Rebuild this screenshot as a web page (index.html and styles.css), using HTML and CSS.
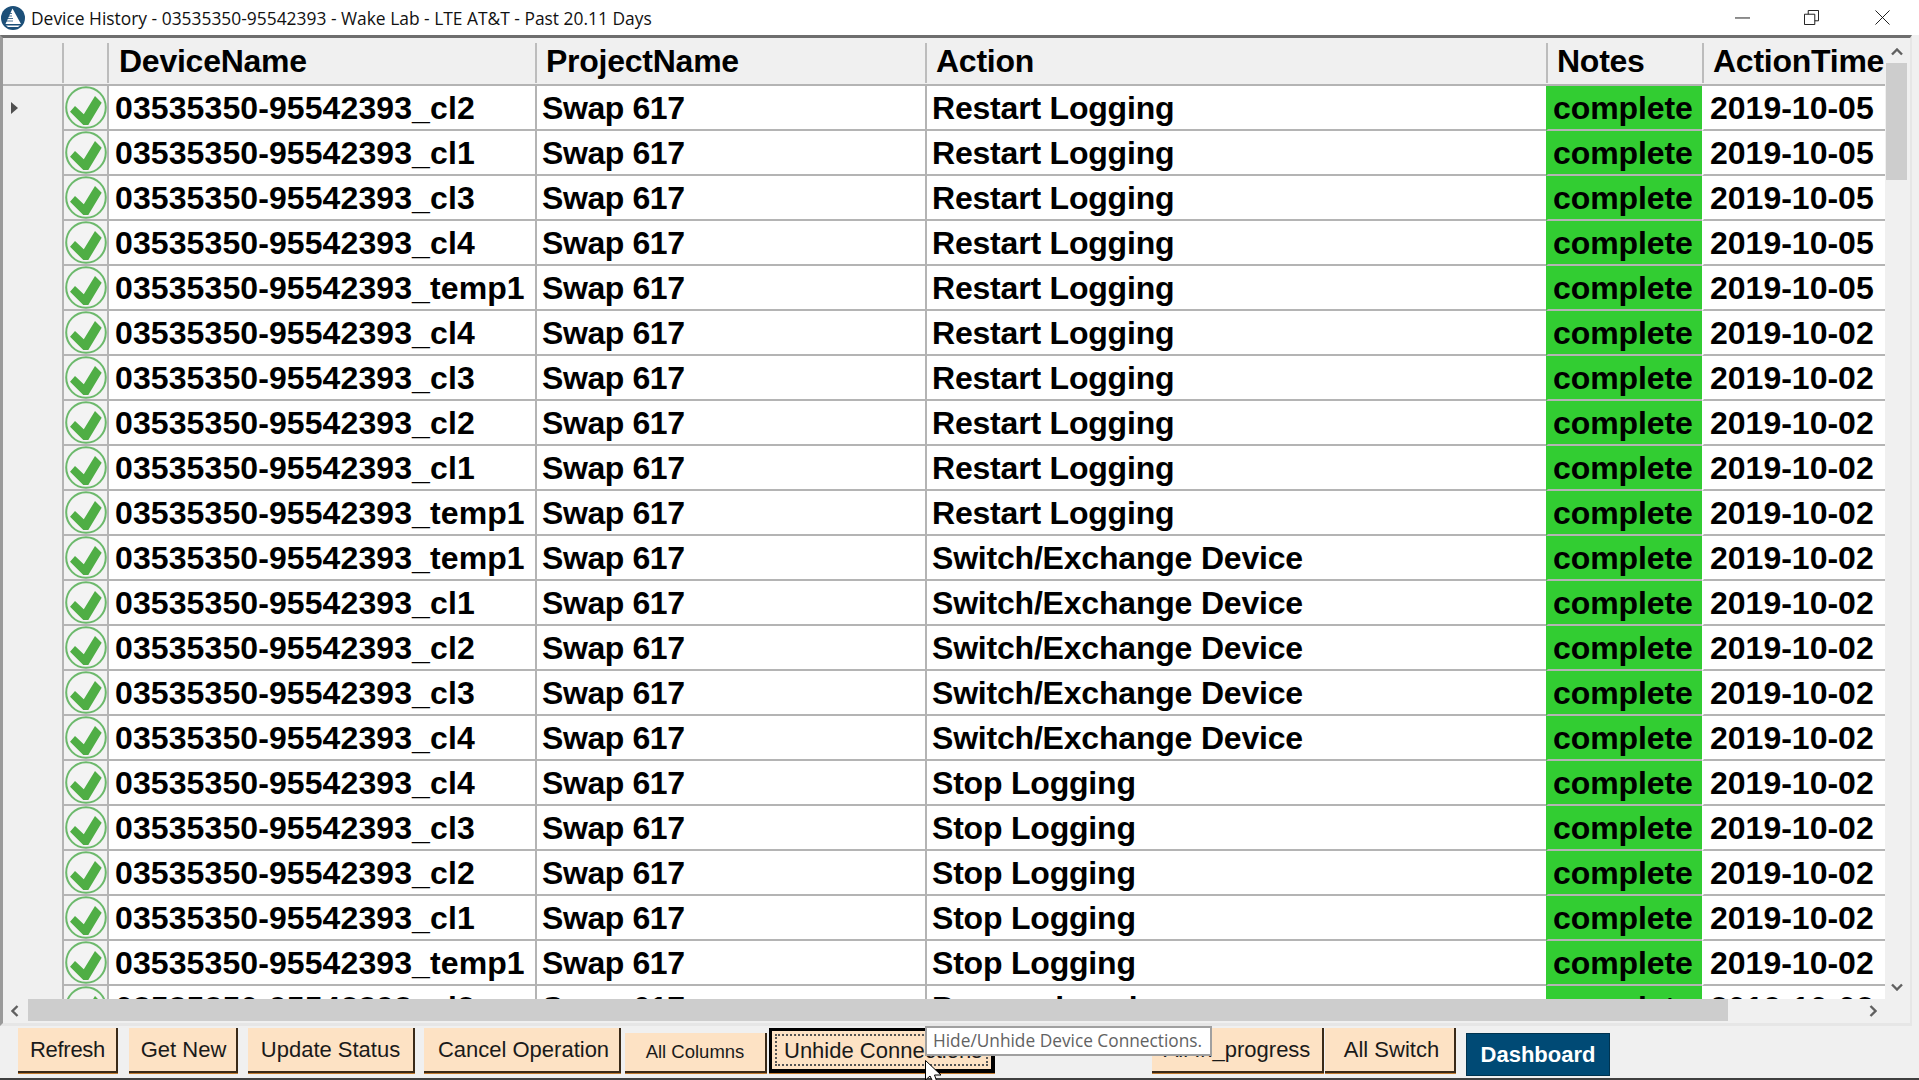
FILE: index.html
```html
<!DOCTYPE html>
<html lang="en">
<head>
<meta charset="utf-8">
<title>Device History</title>
<link rel="stylesheet" href="styles.css">
</head>
<body>
<svg class="defs" width="0" height="0" aria-hidden="true">
  <symbol id="ok" viewBox="0 0 42 43">
    <ellipse cx="21" cy="21.5" rx="19.8" ry="20.3" fill="#f3f3f3" stroke="#6cb96c" stroke-width="2"/>
    <path d="M10 20 L5 25.7 L18.3 39 L23.3 39 L36.7 16.7 L30 10 L18.8 28.3 Z" fill="#4fae45"/>
  </symbol>
</svg>
<header class="titlebar">
  <svg class="logo" viewBox="0 0 24 24" aria-hidden="true">
    <circle cx="12" cy="12" r="12" fill="#1c4f78"/>
    <path d="M11.5 2.500 L20 18 L4.500 18 Z" fill="#ffffff"/>
    <path d="M4.500 12.500 H12 M4.500 15 H12 M6 10 H11 M7.500 7.500 H11" stroke="#1c4f78" stroke-width=".8"/>
    <path d="M5 19.500 H19 L17 21 H7 Z" fill="#ffffff"/>
  </svg>
  <span class="title">Device History - 03535350-95542393 - Wake Lab - LTE AT&amp;T - Past 20.11 Days</span>
  <div class="winctl">
    <svg class="wbtn wmin" viewBox="0 0 16 16" aria-hidden="true"><path d="M0 8.5 H16" stroke="#111" fill="none"/></svg>
    <svg class="wbtn wres" viewBox="0 0 16 16" aria-hidden="true"><path d="M.5 4.500 H11.5 V15.500 H.5 Z M4.500 4.500 V.5 H15.500 V11.500 H11.500" stroke="#111" fill="none"/></svg>
    <svg class="wbtn wcls" viewBox="0 0 16 16" aria-hidden="true"><path d="M.5 .5 L15.500 15.500 M15.500 .5 L.5 15.500" stroke="#111" fill="none"/></svg>
  </div>
</header>

<main class="panel">
  <div class="viewport">
    <table class="grid">
      <colgroup><col class="c-rh"><col class="c-ic"><col class="c-dev"><col class="c-prj"><col class="c-act"><col class="c-not"><col class="c-tim"></colgroup>
      <thead>
        <tr><th class="rh"></th><th class="ic"></th><th class="h-dev">DeviceName</th><th>ProjectName</th><th>Action</th><th>Notes</th><th>ActionTime</th></tr>
      </thead>
      <tbody>
        <tr><td class="rh"><span class="cur"></span></td><td class="ic"><svg class="ok"><use href="#ok"/></svg></td><td>03535350-95542393_cl2</td><td>Swap 617</td><td>Restart Logging</td><td class="note">complete</td><td>2019-10-05</td></tr>
        <tr><td class="rh"></td><td class="ic"><svg class="ok"><use href="#ok"/></svg></td><td>03535350-95542393_cl1</td><td>Swap 617</td><td>Restart Logging</td><td class="note">complete</td><td>2019-10-05</td></tr>
        <tr><td class="rh"></td><td class="ic"><svg class="ok"><use href="#ok"/></svg></td><td>03535350-95542393_cl3</td><td>Swap 617</td><td>Restart Logging</td><td class="note">complete</td><td>2019-10-05</td></tr>
        <tr><td class="rh"></td><td class="ic"><svg class="ok"><use href="#ok"/></svg></td><td>03535350-95542393_cl4</td><td>Swap 617</td><td>Restart Logging</td><td class="note">complete</td><td>2019-10-05</td></tr>
        <tr><td class="rh"></td><td class="ic"><svg class="ok"><use href="#ok"/></svg></td><td>03535350-95542393_temp1</td><td>Swap 617</td><td>Restart Logging</td><td class="note">complete</td><td>2019-10-05</td></tr>
        <tr><td class="rh"></td><td class="ic"><svg class="ok"><use href="#ok"/></svg></td><td>03535350-95542393_cl4</td><td>Swap 617</td><td>Restart Logging</td><td class="note">complete</td><td>2019-10-02</td></tr>
        <tr><td class="rh"></td><td class="ic"><svg class="ok"><use href="#ok"/></svg></td><td>03535350-95542393_cl3</td><td>Swap 617</td><td>Restart Logging</td><td class="note">complete</td><td>2019-10-02</td></tr>
        <tr><td class="rh"></td><td class="ic"><svg class="ok"><use href="#ok"/></svg></td><td>03535350-95542393_cl2</td><td>Swap 617</td><td>Restart Logging</td><td class="note">complete</td><td>2019-10-02</td></tr>
        <tr><td class="rh"></td><td class="ic"><svg class="ok"><use href="#ok"/></svg></td><td>03535350-95542393_cl1</td><td>Swap 617</td><td>Restart Logging</td><td class="note">complete</td><td>2019-10-02</td></tr>
        <tr><td class="rh"></td><td class="ic"><svg class="ok"><use href="#ok"/></svg></td><td>03535350-95542393_temp1</td><td>Swap 617</td><td>Restart Logging</td><td class="note">complete</td><td>2019-10-02</td></tr>
        <tr><td class="rh"></td><td class="ic"><svg class="ok"><use href="#ok"/></svg></td><td>03535350-95542393_temp1</td><td>Swap 617</td><td>Switch/Exchange Device</td><td class="note">complete</td><td>2019-10-02</td></tr>
        <tr><td class="rh"></td><td class="ic"><svg class="ok"><use href="#ok"/></svg></td><td>03535350-95542393_cl1</td><td>Swap 617</td><td>Switch/Exchange Device</td><td class="note">complete</td><td>2019-10-02</td></tr>
        <tr><td class="rh"></td><td class="ic"><svg class="ok"><use href="#ok"/></svg></td><td>03535350-95542393_cl2</td><td>Swap 617</td><td>Switch/Exchange Device</td><td class="note">complete</td><td>2019-10-02</td></tr>
        <tr><td class="rh"></td><td class="ic"><svg class="ok"><use href="#ok"/></svg></td><td>03535350-95542393_cl3</td><td>Swap 617</td><td>Switch/Exchange Device</td><td class="note">complete</td><td>2019-10-02</td></tr>
        <tr><td class="rh"></td><td class="ic"><svg class="ok"><use href="#ok"/></svg></td><td>03535350-95542393_cl4</td><td>Swap 617</td><td>Switch/Exchange Device</td><td class="note">complete</td><td>2019-10-02</td></tr>
        <tr><td class="rh"></td><td class="ic"><svg class="ok"><use href="#ok"/></svg></td><td>03535350-95542393_cl4</td><td>Swap 617</td><td>Stop Logging</td><td class="note">complete</td><td>2019-10-02</td></tr>
        <tr><td class="rh"></td><td class="ic"><svg class="ok"><use href="#ok"/></svg></td><td>03535350-95542393_cl3</td><td>Swap 617</td><td>Stop Logging</td><td class="note">complete</td><td>2019-10-02</td></tr>
        <tr><td class="rh"></td><td class="ic"><svg class="ok"><use href="#ok"/></svg></td><td>03535350-95542393_cl2</td><td>Swap 617</td><td>Stop Logging</td><td class="note">complete</td><td>2019-10-02</td></tr>
        <tr><td class="rh"></td><td class="ic"><svg class="ok"><use href="#ok"/></svg></td><td>03535350-95542393_cl1</td><td>Swap 617</td><td>Stop Logging</td><td class="note">complete</td><td>2019-10-02</td></tr>
        <tr><td class="rh"></td><td class="ic"><svg class="ok"><use href="#ok"/></svg></td><td>03535350-95542393_temp1</td><td>Swap 617</td><td>Stop Logging</td><td class="note">complete</td><td>2019-10-02</td></tr>
        <tr><td class="rh"></td><td class="ic"><svg class="ok"><use href="#ok"/></svg></td><td>03535350-95542393_cl2</td><td>Swap 617</td><td>Processing via</td><td class="note">complete</td><td>2019-10-02</td></tr>
      </tbody>
    </table>
  </div>
  <div class="vbar">
    <svg class="arrow" viewBox="0 0 12 8" aria-hidden="true"><path d="M1 6.5 L6 1.5 L11 6.5" fill="none" stroke="#606060" stroke-width="2.4"/></svg>
    <div class="vtrack"><div class="vthumb"></div></div>
    <svg class="arrow" viewBox="0 0 12 8" aria-hidden="true"><path d="M1 1.5 L6 6.5 L11 1.5" fill="none" stroke="#606060" stroke-width="2.4"/></svg>
  </div>
  <div class="hbar">
    <svg class="harrow" viewBox="0 0 8 12" aria-hidden="true"><path d="M6.5 1 L1.5 6 L6.5 11" fill="none" stroke="#606060" stroke-width="2.4"/></svg>
    <div class="htrack"><div class="hthumb"></div></div>
    <svg class="harrow" viewBox="0 0 8 12" aria-hidden="true"><path d="M1.5 1 L6.5 6 L1.5 11" fill="none" stroke="#606060" stroke-width="2.4"/></svg>
  </div>
  <div class="corner"></div>
</main>

<footer class="toolbar">
  <button class="btn b-refresh">Refresh</button>
  <button class="btn b-new">Get New</button>
  <button class="btn b-update">Update Status</button>
  <button class="btn b-cancel">Cancel Operation</button>
  <button class="btn b-cols">All Columns</button>
  <button class="btn b-unhide"><span class="focus">Unhide Connections</span></button>
  <button class="btn b-prog">All In_progress</button>
  <button class="btn b-switch">All Switch</button>
  <button class="btn b-dash">Dashboard</button>
  <div class="tooltip">Hide/Unhide Device Connections.</div>
  <svg class="pointer" viewBox="0 0 20 20" aria-hidden="true"><path d="M.5 .5 L.5 20 L5 16 L8 22 L12 22 L9.500 15 L16 15 Z" fill="#fff" stroke="#000"/></svg>
</footer>
<div class="taskstrip"></div>
</body>
</html>
```
FILE: styles.css
```css
* { box-sizing: border-box; }
html, body { margin: 0; padding: 0; }
body {
  width: 1919px;
  height: 1080px;
  overflow: hidden;
  display: flex;
  flex-direction: column;
  background: #f0f0f0;
  font-family: "Liberation Sans", Arial, sans-serif;
  color: #000;
}
.defs { position: absolute; }

/* title bar */
.titlebar {
  flex: none;
  height: 35px;
  display: flex;
  align-items: center;
  background: #fff;
  padding: 0 29px 0 1px;
}
.logo { width: 24px; height: 24px; margin: 0 6px 0 0; flex: none; }
.title { font-family: "Open Sans", sans-serif; font-size: 17.4px; color: #111; white-space: nowrap; }
.winctl { margin-left: auto; display: flex; align-items: center; gap: 54px; }
.wbtn { width: 15px; height: 15px; display: block; }
.wres { margin-right: 2px; }

/* grid panel */
.panel {
  flex: none;
  width: 1912px;
  height: 991px;
  display: grid;
  grid-template-columns: 1882px 25px;
  grid-template-rows: 961px 23px;
  border-top: 3px solid #6e6e6e;
  border-left: 3px solid #9a9a9a;
  border-right: 2px solid #e6e6e6;
  border-bottom: 3px solid #e6e6e6;
}
.viewport { overflow: hidden; background: #fff; }
.grid {
  table-layout: fixed;
  border-collapse: separate;
  border-spacing: 0;
  width: 1882px;
  font-size: 32px;
  font-weight: 700;
}
.c-rh { width: 59px; }
.c-ic { width: 45px; }
.c-dev { width: 428px; }
.c-prj { width: 390px; }
.c-act { width: 621px; }
.c-not { width: 156px; }
.c-tim { width: 183px; }

.grid th {
  height: 48px;
  padding: 0 0 0 11px;
  text-align: left;
  white-space: nowrap;
  overflow: hidden;
  background: #f0f0f0;
  border-bottom: 2px solid #b4b4b4;
  position: relative;
  font-weight: 700;
  letter-spacing: -.25px;
}
.grid th.h-dev { padding-left: 12px; }
.grid th + th::before {
  content: "";
  position: absolute;
  left: 0;
  top: 5px;
  bottom: 1px;
  width: 2px;
  background: #bcbcbc;
}
.grid td {
  height: 45px;
  padding: 1px 0 0 6px;
  white-space: nowrap;
  overflow: hidden;
  background: #fff;
  border-bottom: 2px solid #b4b4b4;
  border-left: 2px solid #b4b4b4;
}
.grid td:nth-child(3) { letter-spacing: .1px; }
.grid td:nth-child(4) { padding-left: 5px; letter-spacing: -.4px; }
.grid td:nth-child(5) { padding-left: 5px; letter-spacing: -.2px; }
.grid td.rh { background: #f0f0f0; border-left: 0; padding: 0; position: relative; border-bottom-color: transparent; }
.grid td.rh::after {
  content: "";
  position: absolute;
  left: 4px;
  right: 2px;
  bottom: -2px;
  height: 2px;
  background: #b4b4b4;
}
.grid td.ic { background: #f3f3f3; padding: 0; overflow: visible; position: relative; }
.grid td.note { background: #32cd32; border-left-color: #32cd32; padding-left: 5px; letter-spacing: -.1px; }
.grid td.note + td { border-left-color: #fff; padding-left: 6px; }
.ok { position: absolute; left: 1px; top: 0; width: 42px; height: 43px; }
.cur {
  position: absolute;
  left: 8px;
  top: 16px;
  width: 0;
  height: 0;
  border-left: 7px solid #505050;
  border-top: 6px solid transparent;
  border-bottom: 6px solid transparent;
}

/* scrollbars */
.vbar { display: flex; flex-direction: column; align-items: center; background: #f0f0f0; padding: 10px 2px 8px 0; }
.arrow { width: 12px; height: 8px; flex: none; }
.vtrack { flex: 1; width: 21px; padding-top: 7px; }
.vthumb { height: 117px; background: #cdcdcd; }
.hbar { display: flex; align-items: center; background: #f0f0f0; padding: 0 8px; }
.harrow { width: 8px; height: 12px; flex: none; }
.htrack { flex: 1; height: 100%; padding-left: 9px; }
.hthumb { width: 1700px; height: 22px; background: #cdcdcd; }
.corner { background: #f0f0f0; }

/* bottom buttons */
.toolbar {
  flex: none;
  position: relative;
  height: 52px;
  display: flex;
  align-items: flex-start;
  padding: 2px 0 0 18px;
}
.btn {
  flex: none;
  height: 45px;
  padding: 0;
  background: #fde2c4;
  border: 0;
  border-right: 2px solid #3a2a18;
  border-bottom: 2px solid #3a2a18;
  box-shadow: 0 1px 0 #c07a30;
  font-family: "Liberation Sans", Arial, sans-serif;
  font-size: 22px;
  color: #1a1a1a;
  white-space: nowrap;
}
.b-refresh { width: 100px; padding-left: 1px; letter-spacing: -.3px; }
.b-new { width: 109px; margin-left: 11px; padding-left: 2px; }
.b-update { width: 167px; margin-left: 10px; }
.b-cancel { width: 197px; margin-left: 9px; padding-left: 4px; }
.b-cols { width: 142px; height: 40px; margin: 5px 0 0 4px; font-size: 18.500px; }
.b-unhide {
  width: 226px;
  margin-left: 2px;
  padding: 3px;
  border: 3px solid #000;
  border-right-width: 4px;
  border-bottom-width: 4px;
  text-align: left;
}
.focus {
  display: block;
  height: 100%;
  padding: 2px 0 0 7px;
  border: 2px dotted #555;
}
.b-prog { width: 172px; margin-left: 157px; }
.b-switch { width: 131px; margin-left: 1px; padding-left: 4px; }
.b-dash {
  width: 144px;
  height: 43px;
  margin: 5px 0 0 10px;
  background: #004a75;
  border: 1px solid #00334f;
  box-shadow: none;
  color: #fff;
  font-weight: 700;
}
.tooltip {
  position: absolute;
  left: 925px;
  top: 0;
  width: 287px;
  height: 30px;
  display: flex;
  align-items: center;
  padding: 0 0 2px 6px;
  background: #fff;
  border: 2px solid #a0a0a0;
  color: #626262;
  font-family: "Open Sans", sans-serif;
  font-size: 17.3px;
  white-space: nowrap;
}
.pointer { position: absolute; left: 925px; top: 34px; width: 20px; height: 20px; overflow: visible; }
.taskstrip { flex: none; height: 2px; background: #404040; }
```
